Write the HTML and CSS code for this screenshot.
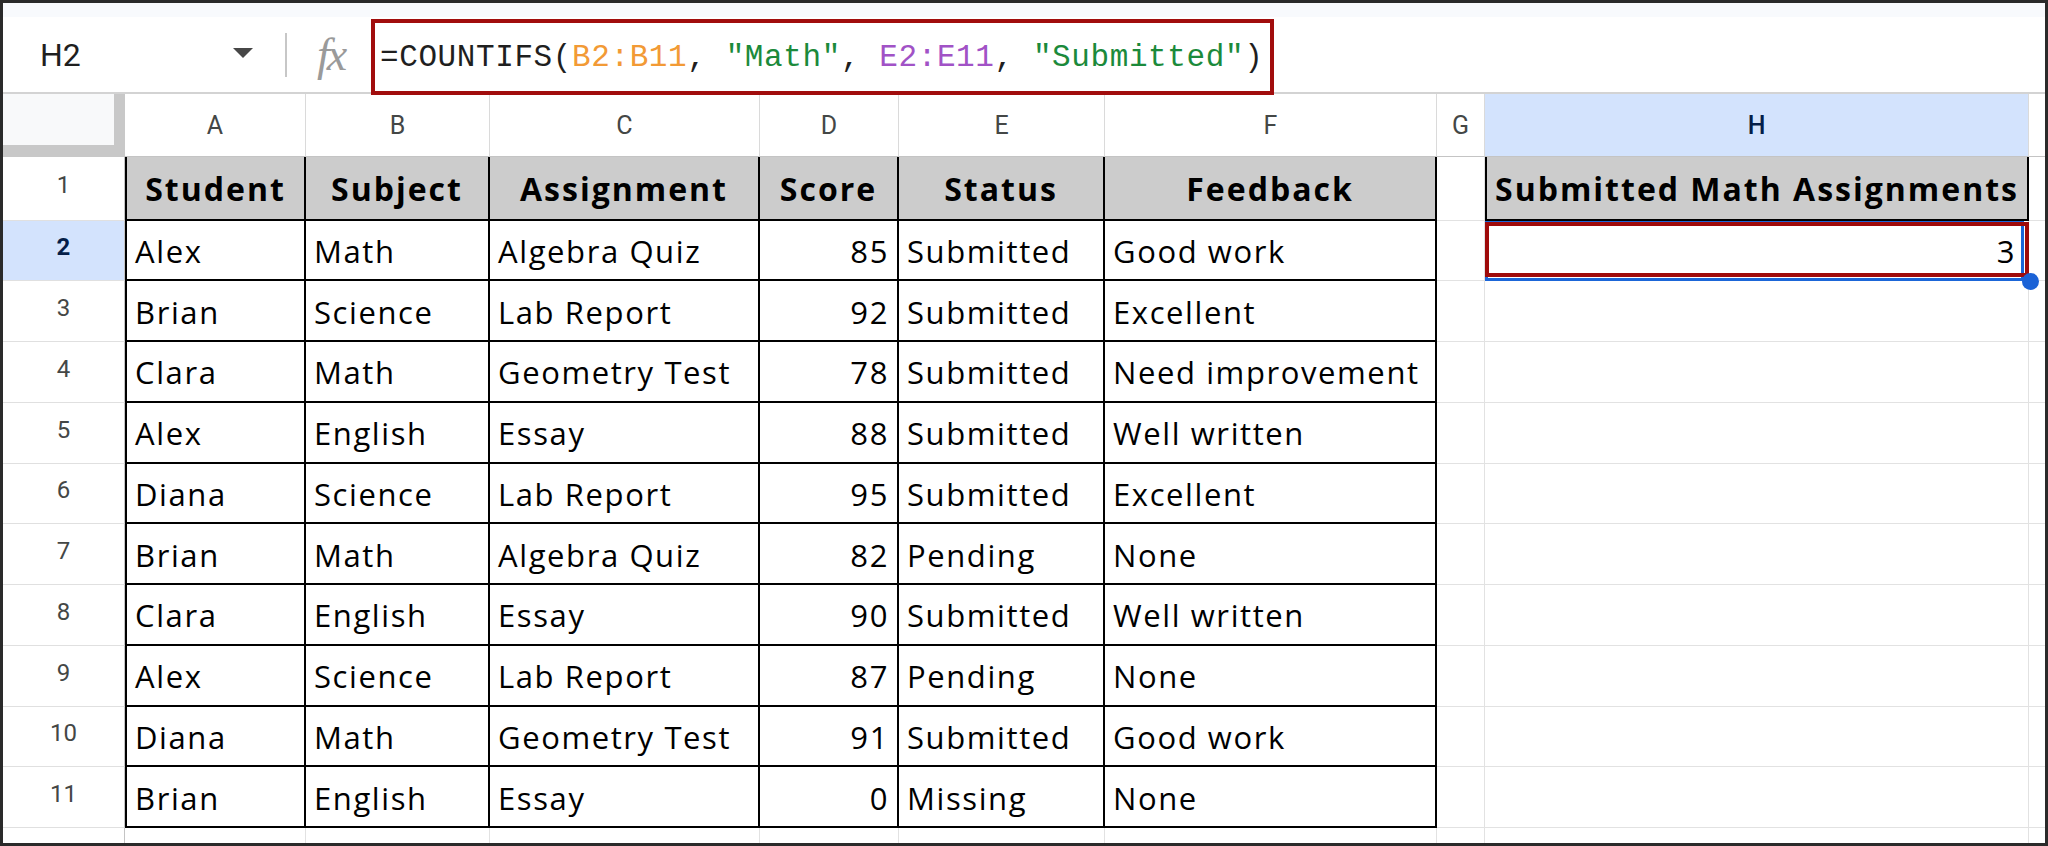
FILE: index.html
```html
<!DOCTYPE html>
<html lang="en">
<head>
    <meta charset="UTF-8">
    <title>COUNTIFS - Submitted Math Assignments</title>
    <link rel="stylesheet" href="styles.css">
</head>
<body>
<div class="window">
    <div class="top-strip"></div>

    <div class="formula-bar">
        <div class="name-box">
            <span>H2</span>
            <span class="caret"></span>
        </div>
        <span class="divider"></span>
        <span class="fx">fx</span>
        <div class="formula">=COUNTIFS(<span class="ref-1">B2:B11</span>, <span class="str">"Math"</span>, <span class="ref-2">E2:E11</span>, <span class="str">"Submitted"</span>)</div>
    </div>

    <div class="sheet">
        <!-- column headers -->
        <div class="corner"></div>
        <div class="ch">A</div>
        <div class="ch">B</div>
        <div class="ch">C</div>
        <div class="ch">D</div>
        <div class="ch">E</div>
        <div class="ch">F</div>
        <div class="ch">G</div>
        <div class="ch sel">H</div>
        <div class="ch"></div>

        <!-- row 1 -->
        <div class="rh">1</div>
        <div class="c t a hd">Student</div>
        <div class="c t hd">Subject</div>
        <div class="c t hd">Assignment</div>
        <div class="c t hd">Score</div>
        <div class="c t hd">Status</div>
        <div class="c t hd">Feedback</div>
        <div class="c"></div>
        <div class="c t a hd">Submitted Math Assignments</div>
        <div class="c"></div>

        <!-- row 2 -->
        <div class="rh sel">2</div>
        <div class="c t a">Alex</div>
        <div class="c t">Math</div>
        <div class="c t">Algebra Quiz</div>
        <div class="c t num">85</div>
        <div class="c t">Submitted</div>
        <div class="c t">Good work</div>
        <div class="c"></div>
        <div class="c num active">3<span class="mark"></span></div>
        <div class="c"></div>

        <!-- row 3 -->
        <div class="rh">3</div>
        <div class="c t a">Brian</div>
        <div class="c t">Science</div>
        <div class="c t">Lab Report</div>
        <div class="c t num">92</div>
        <div class="c t">Submitted</div>
        <div class="c t">Excellent</div>
        <div class="c"></div>
        <div class="c"></div>
        <div class="c"></div>

        <!-- row 4 -->
        <div class="rh">4</div>
        <div class="c t a">Clara</div>
        <div class="c t">Math</div>
        <div class="c t">Geometry Test</div>
        <div class="c t num">78</div>
        <div class="c t">Submitted</div>
        <div class="c t">Need improvement</div>
        <div class="c"></div>
        <div class="c"></div>
        <div class="c"></div>

        <!-- row 5 -->
        <div class="rh">5</div>
        <div class="c t a">Alex</div>
        <div class="c t">English</div>
        <div class="c t">Essay</div>
        <div class="c t num">88</div>
        <div class="c t">Submitted</div>
        <div class="c t">Well written</div>
        <div class="c"></div>
        <div class="c"></div>
        <div class="c"></div>

        <!-- row 6 -->
        <div class="rh">6</div>
        <div class="c t a">Diana</div>
        <div class="c t">Science</div>
        <div class="c t">Lab Report</div>
        <div class="c t num">95</div>
        <div class="c t">Submitted</div>
        <div class="c t">Excellent</div>
        <div class="c"></div>
        <div class="c"></div>
        <div class="c"></div>

        <!-- row 7 -->
        <div class="rh">7</div>
        <div class="c t a">Brian</div>
        <div class="c t">Math</div>
        <div class="c t">Algebra Quiz</div>
        <div class="c t num">82</div>
        <div class="c t">Pending</div>
        <div class="c t">None</div>
        <div class="c"></div>
        <div class="c"></div>
        <div class="c"></div>

        <!-- row 8 -->
        <div class="rh">8</div>
        <div class="c t a">Clara</div>
        <div class="c t">English</div>
        <div class="c t">Essay</div>
        <div class="c t num">90</div>
        <div class="c t">Submitted</div>
        <div class="c t">Well written</div>
        <div class="c"></div>
        <div class="c"></div>
        <div class="c"></div>

        <!-- row 9 -->
        <div class="rh">9</div>
        <div class="c t a">Alex</div>
        <div class="c t">Science</div>
        <div class="c t">Lab Report</div>
        <div class="c t num">87</div>
        <div class="c t">Pending</div>
        <div class="c t">None</div>
        <div class="c"></div>
        <div class="c"></div>
        <div class="c"></div>

        <!-- row 10 -->
        <div class="rh">10</div>
        <div class="c t a">Diana</div>
        <div class="c t">Math</div>
        <div class="c t">Geometry Test</div>
        <div class="c t num">91</div>
        <div class="c t">Submitted</div>
        <div class="c t">Good work</div>
        <div class="c"></div>
        <div class="c"></div>
        <div class="c"></div>

        <!-- row 11 -->
        <div class="rh">11</div>
        <div class="c t a">Brian</div>
        <div class="c t">English</div>
        <div class="c t">Essay</div>
        <div class="c t num">0</div>
        <div class="c t">Missing</div>
        <div class="c t">None</div>
        <div class="c"></div>
        <div class="c"></div>
        <div class="c"></div>

        <!-- row 12 (cut off) -->
        <div class="rh">12</div>
        <div class="c"></div>
        <div class="c"></div>
        <div class="c"></div>
        <div class="c"></div>
        <div class="c"></div>
        <div class="c"></div>
        <div class="c"></div>
        <div class="c"></div>
        <div class="c"></div>
    </div>
</div>
</body>
</html>
```

FILE: styles.css
```css
/* Google Sheets style capture */
* {
    box-sizing: border-box;
}

body {
    margin: 0;
    background: #fff;
    font-family: Roboto, Arial, sans-serif;
}

.window {
    width: 2048px;
    height: 846px;
    border: 3px solid #2a2a2a;
    overflow: hidden;
    background: #fff;
}

.top-strip {
    height: 14px;
    background: #f8fafd;
}

/* formula bar */
.formula-bar {
    display: flex;
    align-items: center;
    height: 77px;
    border-bottom: 2px solid #d3d3d3;
}

.name-box {
    display: flex;
    align-items: center;
    justify-content: space-between;
    width: 282px;
    padding: 0 32px 0 37px;
    font-size: 32px;
    color: #1f1f1f;
}

.caret {
    width: 0;
    height: 0;
    margin-top: -4px;
    border-left: 10px solid transparent;
    border-right: 10px solid transparent;
    border-top: 10px solid #474747;
}

.divider {
    width: 2px;
    height: 44px;
    background: #c7c7c7;
}

.fx {
    width: 40px;
    margin-left: 30px;
    font-family: "Liberation Serif", serif;
    font-style: italic;
    font-size: 46px;
    line-height: 1;
    color: #9a9a9a;
    letter-spacing: -3px;
}

.formula {
    align-self: flex-start;
    display: flex;
    align-items: center;
    width: 903px;
    height: 76px;
    margin: 2px 0 -1px 14px;
    padding-left: 5px;
    border: 4px solid #a10d0d;
    position: relative;
    font-family: "Liberation Mono", monospace;
    font-size: 31px;
    letter-spacing: 0.6px;
    color: #1f1f1f;
    white-space: pre;
}

.ref-1 {
    color: #f29a35;
}

.ref-2 {
    color: #a152c6;
}

.str {
    color: #1b8a3b;
}

/* grid */
.sheet {
    display: grid;
    grid-template-columns: 122px 181px 184px 270px 139px 206px 332px 48px 544px 1fr;
    grid-template-rows: 63px 63.5px repeat(11, 60.75px);
}

.corner {
    background: #f8f9fa;
    border-right: 11px solid #c8c8c8;
    border-bottom: 12px solid #c8c8c8;
}

.ch {
    display: flex;
    align-items: center;
    justify-content: center;
    font-size: 25px;
    color: #444746;
    border-right: 1px solid #dadada;
    border-bottom: 1px solid #c4c4c4;
}

.rh {
    display: flex;
    align-items: center;
    justify-content: center;
    padding-bottom: 6px;
    font-size: 24px;
    color: #444746;
    border-right: 1px solid #c4c4c4;
    border-bottom: 1px solid #e0e0e0;
}

.ch.sel,
.rh.sel {
    background: #d3e3fd;
    color: #041e49;
}

.ch.sel {
    font-weight: 500;
}

.rh.sel {
    font-weight: 700;
}

.c {
    display: flex;
    align-items: center;
    padding: 2px 8px 0;
    font-family: "Open Sans", sans-serif;
    font-size: 31px;
    letter-spacing: 1.6px;
    color: #000;
    white-space: nowrap;
    border-right: 1px solid #e2e2e2;
    border-bottom: 1px solid #e2e2e2;
}

.c.t {
    border-right: 2px solid #000;
    border-bottom: 2px solid #000;
}

.c.a {
    border-left: 2px solid #000;
}

.c.hd {
    justify-content: center;
    background: #cccccc;
    font-size: 32px;
    font-weight: 700;
    letter-spacing: 2px;
}

.c.num {
    justify-content: flex-end;
}

/* active cell H2 */
.c.active {
    position: relative;
    padding-right: 12px;
}

.c.active::before {
    content: '';
    position: absolute;
    top: 0;
    left: 0;
    right: 4px;
    bottom: -1px;
    border: 3px solid #1b66d8;
}

.mark {
    position: absolute;
    top: 1px;
    left: 0;
    right: -1px;
    bottom: 3px;
    border: 4px solid #9e0a0a;
}

.c.active::after {
    content: '';
    position: absolute;
    right: -11px;
    bottom: -10px;
    width: 17px;
    height: 17px;
    border-radius: 50%;
    background: #1b62d6;
    z-index: 2;
}
```
